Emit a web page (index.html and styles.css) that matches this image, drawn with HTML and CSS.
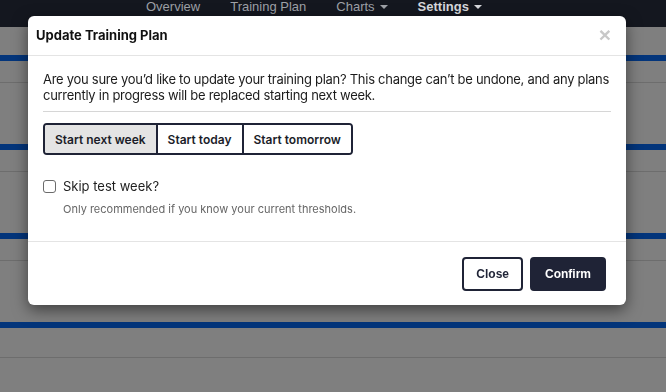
FILE: index.html
```html
<!DOCTYPE html>
<html lang="en">

<head>
    <meta charset="UTF-8">
    <title>Update Training Plan</title>
    <meta name="viewport" content="width=device-width, initial-scale=1.0">
    <link rel="stylesheet" href="styles.css">
</head>

<body>

    <nav class="topnav">
        <a class="nav-link">Overview</a>
        <a class="nav-link">Training Plan</a>
        <a class="nav-link">Charts <span class="caret"></span></a>
        <a class="nav-link current">Settings <span class="caret"></span></a>
    </nav>

    <div class="page">
        <div class="section"><div class="stripe"></div><div class="rule"></div></div>
        <div class="section"><div class="stripe"></div><div class="rule"></div></div>
        <div class="section"><div class="stripe"></div><div class="rule"></div></div>
        <div class="section last"><div class="stripe"></div><div class="rule"></div></div>
    </div>

    <div class="modal">
        <div class="modal-header">
            <h4>Update Training Plan</h4>
            <span class="close-x">&times;</span>
        </div>

        <div class="modal-body">
            <p>Are you sure you’d like to update your training plan? This change can’t be undone, and any plans currently in progress will be replaced starting next week.</p>
            <hr>
            <div class="btn-group">
                <button class="selected">Start next week</button>
                <button>Start today</button>
                <button>Start tomorrow</button>
            </div>
            <label class="check-row">
                <span class="checkbox"></span>
                Skip test week?
            </label>
            <div class="help">Only recommended if you know your current thresholds.</div>
        </div>

        <div class="modal-footer">
            <button class="btn btn-outline">Close</button>
            <button class="btn btn-dark">Confirm</button>
        </div>
    </div>

</body>
</html>
```

FILE: styles.css
```css
* {
    box-sizing: border-box;
    margin: 0;
    padding: 0;
}

html, body {
    width: 100%;
    height: 100%;
    overflow: hidden;
    background: #7f7f7f;
    font-family: Inter, 'Liberation Sans', sans-serif;
}

/* top navigation */
.topnav {
    height: 27px;
    background: #14171f;
    display: flex;
    align-items: flex-start;
    gap: 30px;
    padding-left: 146px;
    font-family: 'Liberation Sans', Arial, sans-serif;
    font-size: 13px;
    line-height: 13px;
}

.nav-link {
    color: #9ea1a7;
    display: flex;
    align-items: center;
    gap: 5px;
}

.nav-link.current {
    color: #d6d8dc;
    font-weight: bold;
}

.caret {
    width: 0;
    height: 0;
    border-left: 4px solid transparent;
    border-right: 4px solid transparent;
    border-top: 4px solid currentColor;
    margin-top: 1px;
}

/* page behind the backdrop */
.page {
    padding-top: 28px;
}

.section {
    height: 89px;
}

.stripe {
    height: 6px;
    background: #03357b;
}

.rule {
    margin-top: 21px;
    height: 1px;
    background: #6d6d6d;
}

.section.last .rule {
    margin-top: 29px;
}

/* modal */
.modal {
    position: fixed;
    top: 16px;
    left: 28px;
    width: 598px;
    background: #fff;
    border-radius: 6px;
    box-shadow: 0 5px 15px rgba(0, 0, 0, 0.5);
    color: #1b1b1b;
}

.modal-header {
    display: flex;
    justify-content: space-between;
    align-items: center;
    padding: 11px 15px 12px 8px;
    border-bottom: 1px solid #e4e4e4;
}

.modal-header h4 {
    font-size: 13px;
    line-height: 16px;
    font-weight: 700;
    color: #111;
}

.close-x {
    font-family: 'Liberation Sans', Arial, sans-serif;
    font-size: 21px;
    line-height: 16px;
    font-weight: bold;
    color: #c8c8c8;
}

.modal-body {
    padding: 15px 15px 25px;
}

.modal-body p {
    font-size: 13px;
    line-height: 16px;
    letter-spacing: -0.28px;
    margin-bottom: 8px;
}

hr {
    border: none;
    border-top: 1px solid #d6d6d6;
    margin-bottom: 11px;
}

.btn-group {
    display: inline-flex;
    border: 2px solid #1f2336;
    border-radius: 4px;
    overflow: hidden;
}

.btn-group button {
    font-family: Inter, sans-serif;
    font-size: 12px;
    font-weight: 600;
    color: #1b1d29;
    background: #fff;
    border: none;
    height: 28px;
    padding: 0 10px;
}

.btn-group button + button {
    border-left: 2px solid #1f2336;
}

.btn-group button.selected {
    background: #e4e4e4;
}

.check-row {
    display: flex;
    align-items: center;
    gap: 7px;
    margin-top: 23px;
    font-size: 13px;
    line-height: 16px;
    color: #1e1e1e;
}

.checkbox {
    width: 13px;
    height: 13px;
    border: 1px solid #6b6b6b;
    border-radius: 3px;
    background: #fff;
}

.help {
    margin-top: 8px;
    padding-left: 20px;
    font-size: 11px;
    line-height: 14px;
    color: #666;
}

.modal-footer {
    display: flex;
    justify-content: flex-end;
    gap: 7px;
    padding: 15px 20px 14px;
    border-top: 1px solid #e4e4e4;
}

.btn {
    font-family: 'Liberation Sans', Arial, sans-serif;
    font-size: 12px;
    font-weight: bold;
    height: 34px;
    padding: 0 13px;
    border: 2px solid #1f2336;
    border-radius: 4px;
}

.btn-outline {
    background: #fff;
    color: #1f2336;
    padding: 0 12px;
}

.btn-dark {
    background: #1f2336;
    color: #fff;
}
```
